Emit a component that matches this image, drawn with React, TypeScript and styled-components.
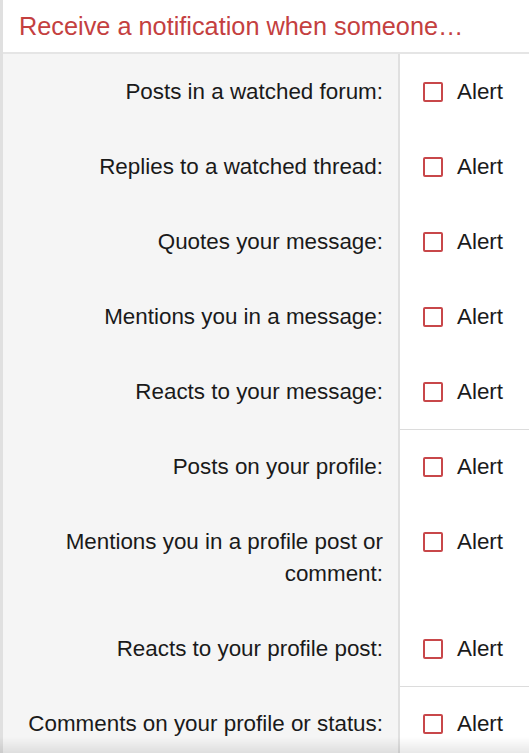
import React from 'react';
import styled, { createGlobalStyle } from 'styled-components';

const GlobalStyle = createGlobalStyle`
  html, body {
    margin: 0;
    padding: 0;
    background: #fff;
  }
  body {
    font-family: "Liberation Sans", Arial, sans-serif;
    color: #1a1a1a;
  }
`;

const Block = styled.div`
  border-left: 3px solid #e0e0e0;
  background: #fff;
`;

const Header = styled.h3`
  margin: 0;
  height: 54px;
  box-sizing: border-box;
  padding: 1px 16px 0;
  display: flex;
  align-items: center;
  font-size: 25.3px;
  font-weight: normal;
  color: #c4403f;
  border-bottom: 2px solid #e5e5e5;
`;

const Rows = styled.div`
  display: grid;
  grid-template-columns: 397px 1fr;
`;

const Label = styled.div`
  background: #f5f5f5;
  border-right: 2px solid #e0e0e0;
  text-align: right;
  font-size: 22.4px;
  line-height: 32px;
  padding: 22px 15px 21px 15px;
`;

const Cell = styled.div<{ $separated?: boolean }>`
  display: flex;
  align-items: flex-start;
  gap: 14px;
  padding: ${p => (p.$separated ? '21px' : '22px')} 0 21px 23px;
  border-top: ${p => (p.$separated ? '1px solid #dcdcdc' : 'none')};
  font-size: 22.4px;
  line-height: 32px;
`;

const Box = styled.span`
  flex: none;
  width: 20px;
  height: 20px;
  box-sizing: border-box;
  margin-top: 6px;
  border: 2px solid #c8474a;
  border-radius: 2px;
  background: #fff;
`;

const Fade = styled.div`
  position: fixed;
  left: 0;
  right: 0;
  bottom: 0;
  height: 16px;
  background: linear-gradient(to bottom, rgba(0, 0, 0, 0), rgba(0, 0, 0, 0.09));
  pointer-events: none;
`;

const options = [
  { label: 'Posts in a watched forum:' },
  { label: 'Replies to a watched thread:' },
  { label: 'Quotes your message:' },
  { label: 'Mentions you in a message:' },
  { label: 'Reacts to your message:' },
  { label: 'Posts on your profile:', separated: true },
  { label: 'Mentions you in a profile post or comment:' },
  { label: 'Reacts to your profile post:' },
  { label: 'Comments on your profile or status:', separated: true },
];

export default function App() {
  return (
    <>
      <GlobalStyle />
      <Block>
        <Header>Receive a notification when someone…</Header>
        <Rows>
          {options.map(o => (
            <React.Fragment key={o.label}>
              <Label>{o.label}</Label>
              <Cell $separated={o.separated}>
                <Box />
                <span>Alert</span>
              </Cell>
            </React.Fragment>
          ))}
        </Rows>
      </Block>
      <Fade />
    </>
  );
}
